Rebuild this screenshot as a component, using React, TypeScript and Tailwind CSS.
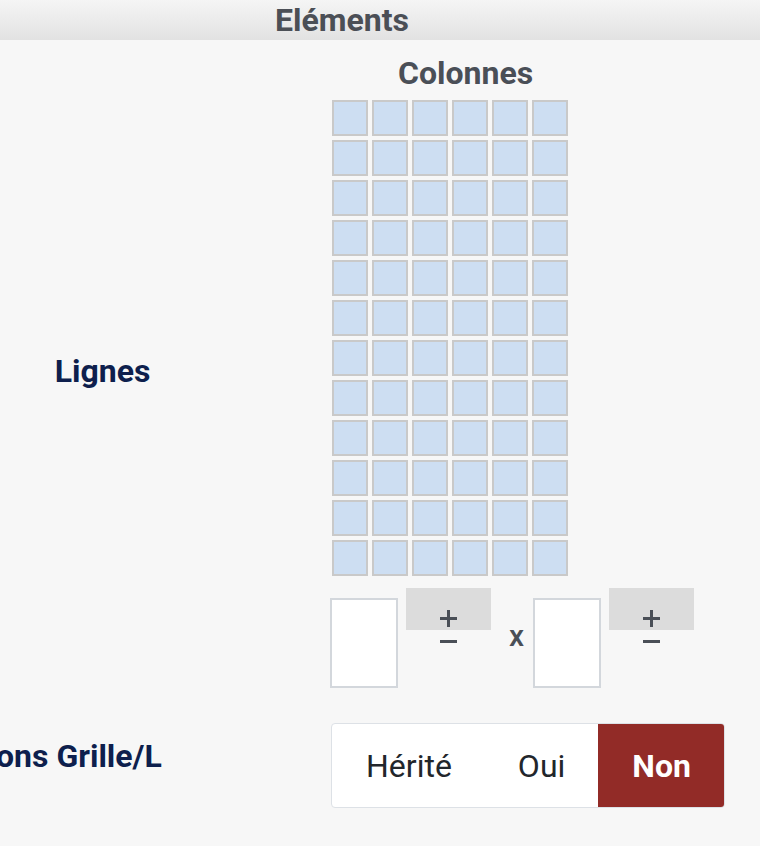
import React from "react";

const ROWS = 12;
const COLS = 6;

const Stepper = () => (
  <div className="flex w-[85px] flex-col items-center">
    <div className="flex h-[42px] w-full items-end justify-center bg-[#dcdcdc] pb-[3px]">
      <svg width="17" height="17" viewBox="0 0 17 17" className="text-[#4a4f57]">
        <path d="M8.5 0v17M0 8.5h17" stroke="currentColor" strokeWidth="3" />
      </svg>
    </div>
    <svg width="17" height="3" viewBox="0 0 17 3" className="mt-[10px] text-[#4a4f57]">
      <path d="M0 1.5h17" stroke="currentColor" strokeWidth="3" />
    </svg>
  </div>
);

const SizeInput = () => (
  <input
    type="text"
    className="mt-[10px] h-[90px] w-[68px] border-2 border-[#d3d7dc] bg-white outline-none"
  />
);

export default function App() {
  const cells = Array.from({ length: ROWS * COLS });

  return (
    <div className="min-h-[846px] w-[760px] overflow-hidden bg-[#f7f7f7] font-['Roboto',sans-serif]">
      <div className="h-[40px] bg-gradient-to-b from-[#f5f5f5] to-[#e2e2e2] pl-[275px] text-[32px] font-bold leading-[40px] text-[#4b4f56]">
        Eléments
      </div>

      <div className="flex items-center">
        <div className="mt-[13px] w-[205px] text-center text-[32px] font-bold leading-[40px] text-[#0e1f4d]">
          Lignes
        </div>

        <div className="ml-[125px] pt-[13px]">
          <div className="pl-[68px] text-[32px] font-bold leading-[40px] text-[#4a4f57]">Colonnes</div>

          <div className="mt-[7px] ml-[2px] grid grid-cols-[repeat(6,36px)] gap-1">
            {cells.map((_, i) => (
              <div key={i} className="h-[36px] w-[36px] border-2 border-[#c9c9c9] bg-[#cddef2]" />
            ))}
          </div>

          <div className="mt-3 flex items-start">
            <SizeInput />
            <div className="ml-2">
              <Stepper />
            </div>
            <span className="ml-[18px] mt-[28px] w-[15px] text-[30px] font-medium leading-[40px] text-[#4a4f57]">
              x
            </span>
            <div className="ml-[9px]">
              <SizeInput />
            </div>
            <div className="ml-2">
              <Stepper />
            </div>
          </div>
        </div>
      </div>

      <div className="mt-[35px] flex items-start">
        <div className="mt-[13px] w-[331px] overflow-hidden whitespace-nowrap text-[32px] font-bold leading-[40px] text-[#0e1f4d]">
          <span className="ml-[-4px]">ons Grille/L</span>
        </div>
        <div className="flex h-[85px] overflow-hidden rounded-[4px] border border-[#dde1e6] bg-white text-[32px] leading-[40px]">
          <div className="flex items-center pl-[34px] pr-[32px] text-[#22262b]">Hérité</div>
          <div className="flex items-center pl-[34px] pr-[33px] text-[#22262b]">Oui</div>
          <div className="flex items-center bg-[#922b27] pl-[34px] pr-[33px] font-bold text-white">Non</div>
        </div>
      </div>
    </div>
  );
}
